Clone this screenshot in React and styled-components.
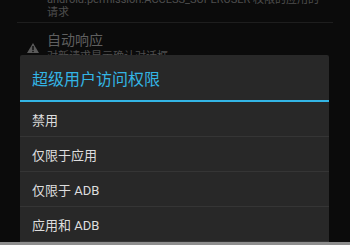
import React from 'react'
import styled, { createGlobalStyle } from 'styled-components'

const Global = createGlobalStyle`
  html, body {
    margin: 0;
    padding: 0;
    background: #0b0b0b;
  }
  body {
    font-family: "Roboto", "Noto Sans CJK SC", sans-serif;
  }
`;

const Screen = styled.div`
  position: relative;
  width: 350px;
  height: 245px;
  overflow: hidden;
  background: #0b0b0b;
`;

const Pref = styled.div`
  display: flex;
  align-items: flex-start;
  padding: 0 17px 0 27px;
`;

const IconSlot = styled.div`
  width: 20px;
  flex-shrink: 0;
  padding-top: ${p => p.$top || 0}px;
`;

const PrefText = styled.div`
  display: flex;
  flex-direction: column;
`;

const PrefTitle = styled.div`
  font-size: 14px;
  line-height: 20px;
  color: #5f5f5f;
`;

const PrefSummary = styled.div`
  font-size: 11px;
  line-height: 13px;
  color: #4e4e4e;
  white-space: nowrap;
`;

const Divider = styled.div`
  height: 1px;
  margin: 3px 17px 7px;
  background: #1e1e1e;
`;

const Top = styled.div`
  margin-top: -7px;
`;

const Dialog = styled.div`
  position: absolute;
  left: 20px;
  top: 55px;
  width: 309px;
  bottom: 3px;
  background: #282828;
  border-radius: 2px 2px 0 0;
  display: flex;
  flex-direction: column;
`;

const DialogTitle = styled.div`
  height: 46px;
  display: flex;
  align-items: center;
  padding-left: 12px;
  font-size: 16px;
  color: #33b5e5;
  border-bottom: 2px solid #33b5e5;
`;

const Item = styled.div`
  height: 34.5px;
  display: flex;
  align-items: center;
  padding-left: 12px;
  font-size: 13px;
  color: #dedede;
  border-bottom: 1px solid #353535;
`;

const BottomEdge = styled.div`
  position: absolute;
  left: 0;
  right: 0;
  bottom: 0;
  height: 3px;
  background: #8e8e8e;
`;

const Warn = () => (
  <svg width="12" height="10" viewBox="0 0 12 10">
    <path d="M6 0 L12 10 L0 10 Z" fill="#5a5a5a" />
    <rect x="5.3" y="3" width="1.4" height="4" fill="#0b0b0b" />
    <rect x="5.3" y="7.8" width="1.4" height="1.3" fill="#0b0b0b" />
  </svg>
);

const options = ['禁用', '仅限于应用', '仅限于 ADB', '应用和 ADB'];

const App = () => {
  return (
    <Screen>
      <Global />
      <Top>
        <Pref>
          <IconSlot />
          <PrefText>
            <PrefSummary>android.permission.ACCESS_SUPERUSER 权限的应用的</PrefSummary>
            <PrefSummary>请求</PrefSummary>
          </PrefText>
        </Pref>
      </Top>
      <Divider />
      <Pref>
        <IconSlot $top={8}><Warn /></IconSlot>
        <PrefText>
          <PrefTitle>自动响应</PrefTitle>
          <PrefSummary>对新请求显示确认对话框</PrefSummary>
        </PrefText>
      </Pref>
      <Dialog>
        <DialogTitle>超级用户访问权限</DialogTitle>
        {options.map(o => <Item key={o}>{o}</Item>)}
      </Dialog>
      <BottomEdge />
    </Screen>
  )
}

export default App
